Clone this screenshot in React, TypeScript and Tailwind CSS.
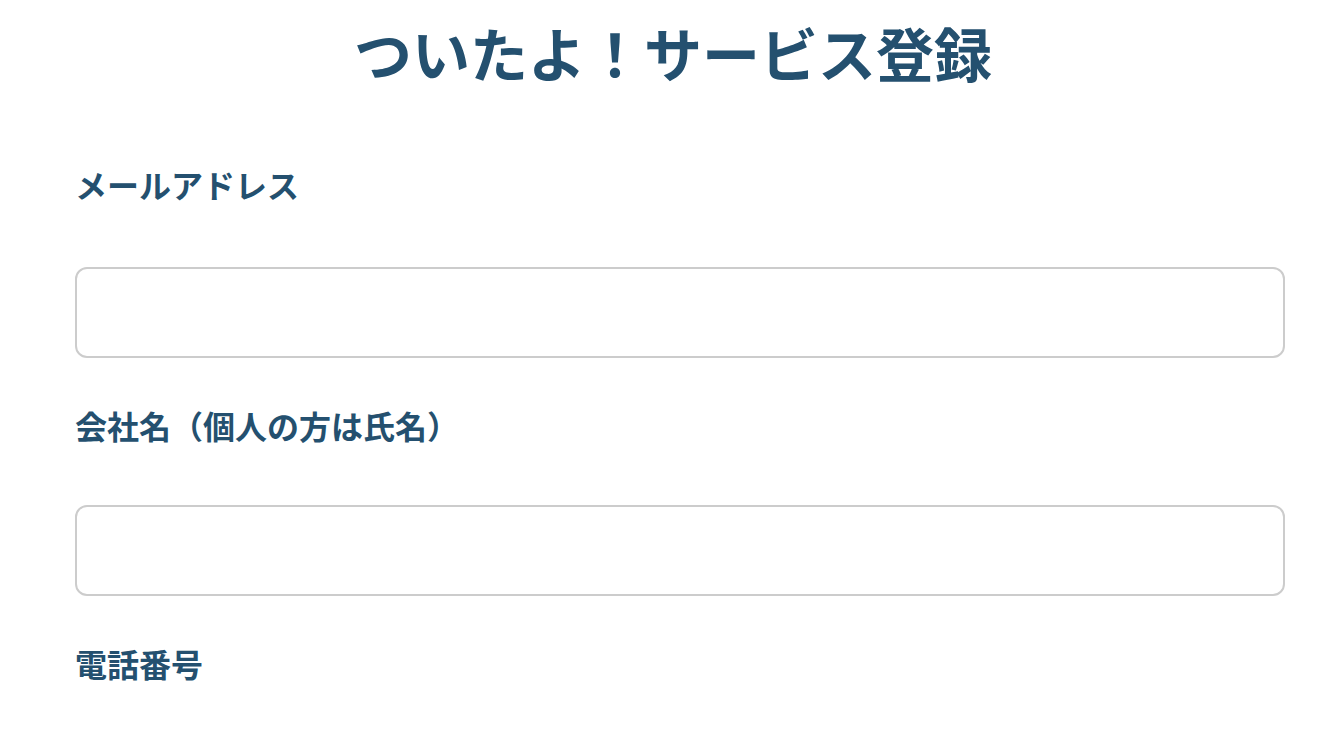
export default function App() {
  const font = { fontFamily: '"Noto Sans CJK JP", "Noto Sans", sans-serif' };
  return (
    <div className="h-screen overflow-hidden bg-white pl-[75px] pr-[59px] pt-[9px] text-[#24506f]" style={font}>
      <h1 className="text-center text-[58px] font-bold leading-[1.5] mb-[64px] pr-[14px]">
        ついたよ！サービス登録
      </h1>

      <form className="flex flex-col">
        <label className="text-[32px] font-bold leading-[1.5] mb-[59px]">メールアドレス</label>
        <input
          type="email"
          className="h-[91px] w-full rounded-[12px] border-2 border-[#cccccc] bg-white mb-[43px] outline-none"
        />

        <label className="text-[32px] font-bold leading-[1.5] mb-[56px]">会社名（個人の方は氏名）</label>
        <input
          type="text"
          className="h-[91px] w-full rounded-[12px] border-2 border-[#cccccc] bg-white mb-[43px] outline-none"
        />

        <label className="text-[32px] font-bold leading-[1.5]">電話番号</label>
      </form>
    </div>
  );
}
